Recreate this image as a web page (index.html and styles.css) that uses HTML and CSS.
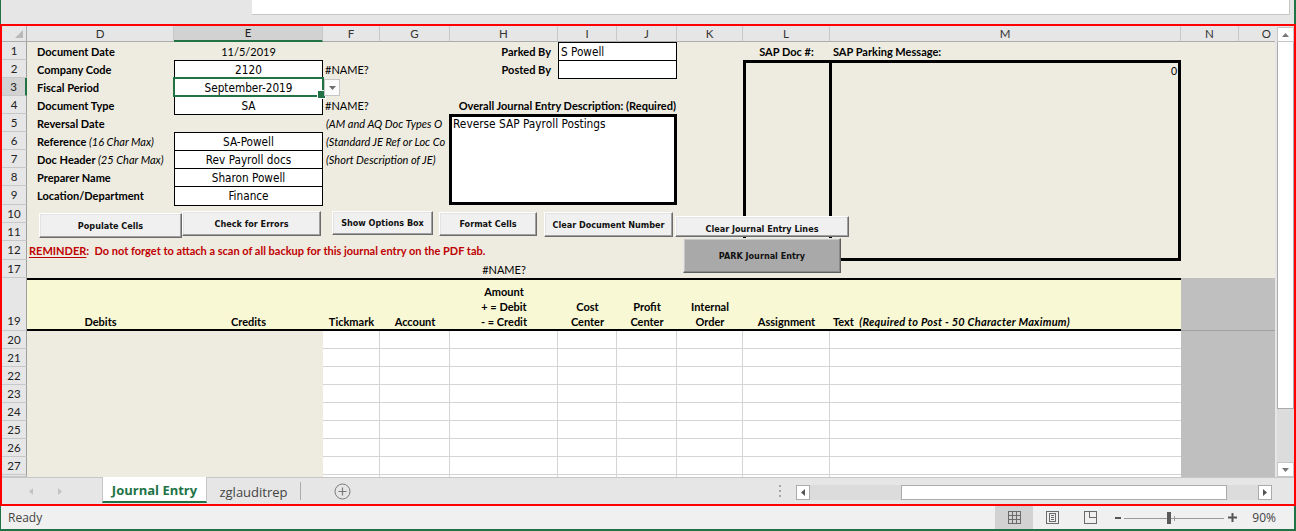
FILE: index.html
```html
<!DOCTYPE html>
<html>
<head>
<meta charset="utf-8">
<title>Journal Entry</title>
<link rel="stylesheet" href="styles.css">
</head>
<body>
<div class="app">
  <div class="topbar"><div class="formula"></div></div>
  <div class="frame">
    <div class="main">
      <div class="sheet">
        <div class="ch corner"><span class="tri"></span></div>
        <div class="ch">D</div>
        <div class="ch sel">E</div>
        <div class="ch">F</div>
        <div class="ch">G</div>
        <div class="ch">H</div>
        <div class="ch">I</div>
        <div class="ch">J</div>
        <div class="ch">K</div>
        <div class="ch">L</div>
        <div class="ch">M</div>
        <div class="ch">N</div>
        <div class="ch last">O</div>

        <div class="rh">1</div>
        <div class="rh">2</div>
        <div class="rh sel">3</div>
        <div class="rh">4</div>
        <div class="rh">5</div>
        <div class="rh">6</div>
        <div class="rh">7</div>
        <div class="rh">8</div>
        <div class="rh">9</div>
        <div class="rh">10</div>
        <div class="rh">11</div>
        <div class="rh">12</div>
        <div class="rh">17</div>
        <div class="rh tall">19</div>
        <div class="rh">20</div>
        <div class="rh">21</div>
        <div class="rh">22</div>
        <div class="rh">23</div>
        <div class="rh">24</div>
        <div class="rh">25</div>
        <div class="rh">26</div>
        <div class="rh">27</div>
        <div class="rh"></div>

        <!-- row 1 -->
        <div class="c lbl y1 xD">Document Date</div>
        <div class="c ctr y1 xE">11/5/2019</div>
        <div class="c lbl rt y1 xH">Parked By</div>
        <div class="box left y1 xIJ">S Powell</div>
        <div class="c lbl ctr y1 xL">SAP Doc #:</div>
        <div class="c lbl y1 xM pad3">SAP Parking Message:</div>

        <!-- row 2 -->
        <div class="c lbl y2 xD">Company Code</div>
        <div class="box y2 xE">2120</div>
        <div class="c err y2 xF">#NAME?</div>
        <div class="c lbl rt y2 xH">Posted By</div>
        <div class="box y2 xIJ"></div>

        <!-- row 3 -->
        <div class="c lbl y3 xD">Fiscal Period</div>
        <div class="box y3 xE">September-2019</div>

        <!-- row 4 -->
        <div class="c lbl y4 xD">Document Type</div>
        <div class="box y4 xE">SA</div>
        <div class="c err y4 xF">#NAME?</div>
        <div class="c lbl rt y4 xHJ">Overall Journal Entry Description: (Required)</div>

        <!-- row 5 -->
        <div class="c lbl y5 xD">Reversal Date</div>
        <div class="c note y5 xF">(AM and AQ Doc Types O</div>

        <!-- row 6 -->
        <div class="c lbl y6 xD"><span>Reference <i>(16 Char Max)</i></span></div>
        <div class="box y6 xE">SA-Powell</div>
        <div class="c note y6 xF">(Standard JE Ref or Loc Co</div>

        <!-- row 7 -->
        <div class="c lbl y7 xD"><span>Doc Header <i>(25 Char Max)</i></span></div>
        <div class="box y7 xE">Rev Payroll docs</div>
        <div class="c note y7 xF">(Short Description of JE)</div>

        <!-- row 8 -->
        <div class="c lbl y8 xD">Preparer Name</div>
        <div class="box y8 xE">Sharon Powell</div>

        <!-- row 9 -->
        <div class="c lbl y9 xD">Location/Department</div>
        <div class="box y9 xE">Finance</div>

        <!-- row 12 -->
        <div class="c reminder"><span><u>REMINDER</u>:&nbsp; Do not forget to attach a scan of all backup for this journal entry on the PDF tab.</span></div>

        <!-- row 17 -->
        <div class="c ctr y17 xH">#NAME?</div>

        <!-- row 19 header -->
        <div class="band"></div>
        <div class="th y19 xD">Debits</div>
        <div class="th y19 xE">Credits</div>
        <div class="th y19 xF">Tickmark</div>
        <div class="th y19 xG">Account</div>
        <div class="th y19 xH">Amount<br>+ = Debit<br>- = Credit</div>
        <div class="th y19 xI">Cost<br>Center</div>
        <div class="th y19 xJ">Profit<br>Center</div>
        <div class="th y19 xK">Internal<br>Order</div>
        <div class="th y19 xL">Assignment</div>
        <div class="th left y19 xM"><span>Text&nbsp; <i>(Required to Post - 50 Character Maximum)</i></span></div>

        <div class="gray ghead"></div>
        <div class="gray gbody"></div>

        <div class="tbody">
          <div></div><div></div><div></div><div></div><div></div><div></div><div></div><div></div>
        </div>

        <!-- shapes on the sheet -->
        <div class="selbox"></div>
        <div class="dd"><svg width="7" height="4" viewBox="0 0 7 4"><path d="M0 0h7L3.5 4z" fill="#6d6d6d"/></svg></div>
        <div class="desc">Reverse SAP Payroll Postings</div>
        <div class="sapbox"><span class="zero">0</span></div>
        <div class="sapdoc"></div>

        <div class="btn b-pop">Populate Cells</div>
        <div class="btn b-chk">Check for Errors</div>
        <div class="btn b-opt">Show Options Box</div>
        <div class="btn b-fmt">Format Cells</div>
        <div class="btn b-cdn">Clear Document Number</div>
        <div class="btn b-cje">Clear Journal Entry Lines</div>
        <div class="btn park">PARK Journal Entry</div>
      </div>
      <div class="vscroll">
        <div class="sbtn"><svg width="7" height="4" viewBox="0 0 7 4"><path d="M0 4h7L3.5 0z" fill="#777"/></svg></div>
        <div class="sthumb"></div>
        <div class="strack"></div>
        <div class="sbtn"><svg width="7" height="4" viewBox="0 0 7 4"><path d="M0 0h7L3.5 4z" fill="#777"/></svg></div>
      </div>
    </div>
    <div class="tabbar">
      <div class="tabnav">
        <svg width="4" height="7" viewBox="0 0 4 7"><path d="M4 0v7L0 3.5z" fill="#c3c3c3"/></svg>
        <svg width="4" height="7" viewBox="0 0 4 7"><path d="M0 0v7l4-3.5z" fill="#c3c3c3"/></svg>
      </div>
      <div class="tab active">Journal Entry</div>
      <div class="tab">zglauditrep</div>
      <div class="tabsep"></div>
      <div class="addtab"><svg width="17" height="17" viewBox="0 0 17 17"><circle cx="8.5" cy="8.5" r="7.5" fill="none" stroke="#7a7a7a"/><path d="M8.5 4.5v8M4.5 8.5h8" stroke="#7a7a7a" stroke-width="1.2"/></svg></div>
      <div class="tabspace"></div>
      <div class="dots"><i></i><i></i><i></i></div>
      <div class="hscroll">
        <div class="hbtn"><svg width="4" height="7" viewBox="0 0 4 7"><path d="M4 0v7L0 3.5z" fill="#555"/></svg></div>
        <div class="htrack"><div class="hthumb"></div></div>
        <div class="hbtn"><svg width="4" height="7" viewBox="0 0 4 7"><path d="M0 0v7l4-3.5z" fill="#555"/></svg></div>
      </div>
    </div>
  </div>
  <div class="status">
    <div class="ready">Ready</div>
    <div class="sright">
      <div class="view on"><svg width="13" height="13" viewBox="0 0 13 13"><rect x=".5" y=".5" width="12" height="12" fill="none" stroke="#6a6a6a"/><path d="M4.5 0v13M8.5 0v13M0 4.5h13M0 8.5h13" stroke="#6a6a6a"/></svg></div>
      <div class="view"><svg width="13" height="13" viewBox="0 0 13 13"><rect x=".5" y=".5" width="12" height="12" fill="none" stroke="#6a6a6a"/><rect x="3.5" y="2.5" width="6" height="8" fill="none" stroke="#6a6a6a"/><path d="M5 4.5h3M5 6.5h3M5 8.5h3" stroke="#6a6a6a"/></svg></div>
      <div class="view"><svg width="13" height="13" viewBox="0 0 13 13"><rect x=".5" y=".5" width="12" height="12" fill="none" stroke="#6a6a6a"/><path d="M5.5 0v7M5.5 6.5h7" stroke="#6a6a6a"/></svg></div>
      <svg class="zminus" width="6" height="2" viewBox="0 0 6 2"><rect width="6" height="2" fill="#555"/></svg>
      <div class="slider"><i class="knob"></i><i class="tick"></i></div>
      <svg class="zplus" width="9" height="9" viewBox="0 0 9 9"><path d="M0 3.5h9v2H0zM3.5 0h2v9h-2z" fill="#555"/></svg>
      <div class="zoomv">90%</div>
    </div>
  </div>
</div>
</body>
</html>
```
FILE: styles.css
```css
* { box-sizing: border-box; margin: 0; padding: 0; }
html, body { width: 1296px; height: 531px; overflow: hidden; }
body { background: #e6e6e6; font-family: "Lato", "Liberation Sans", sans-serif; font-size: 11px; color: #000; }
.app { width: 1296px; height: 531px; display: flex; flex-direction: column; }

/* top formula strip */
.topbar { height: 24px; flex: none; background: #e6e6e6; border-left: 1px solid #217346; border-right: 2px solid #217346; padding-left: 251px; }
.formula { width: 1038px; height: 15px; background: #fff; border-right: 1px solid #c6c6c6; border-bottom: 1px solid #c6c6c6; }

/* red frame */
.frame { height: 482px; flex: none; border: 2px solid #ff0000; display: flex; flex-direction: column; background: #e6e6e6; }
.main { height: 451px; flex: none; display: flex; gap: 2px; }

/* sheet grid */
.sheet {
  position: relative; width: 1273px; height: 451px; flex: none; overflow: hidden;
  display: grid;
  grid-template-columns: 25px 147px 149px 57px 70px 108px 59px 60px 66px 87px 351px 58px 36px;
  grid-template-rows: 16px 18px 18px 18px 18px 18px 18px 18px 18px 19px 18px 18px 19px 18px 53px repeat(8, 18px) 2px;
  background: #eeece1;
}
.ch { grid-row: 1; background: #e6e6e6; border-right: 1px solid #c8c8c8; border-bottom: 1px solid #ababab; font-size: 11.5px; color: #333; display: flex; align-items: center; justify-content: center; line-height: 1; }
.ch.sel { background: #d2d2d2; border-bottom: 2px solid #217346; color: #1d1d1d; }
.ch.last { justify-content: flex-end; padding-right: 4px; border-right: none; }
.ch.corner { position: relative; border-right: 1px solid #ababab; }
.tri { position: absolute; right: 3px; bottom: 3px; width: 0; height: 0; border-left: 8px solid transparent; border-bottom: 8px solid #b9b9b9; }
.rh { grid-column: 1; background: #e6e6e6; border-right: 1px solid #9f9f9f; border-bottom: 1px solid #c8c8c8; font-size: 11.5px; color: #222; display: flex; align-items: center; justify-content: center; line-height: 1; }
.rh.sel { background: #d2d2d2; border-right: 2px solid #217346; }
.rh.tall { align-items: flex-end; padding-bottom: 4px; }

/* placement helpers */
.y1 { grid-row: 2; } .y2 { grid-row: 3; } .y3 { grid-row: 4; } .y4 { grid-row: 5; } .y5 { grid-row: 6; }
.y6 { grid-row: 7; } .y7 { grid-row: 8; } .y8 { grid-row: 9; } .y9 { grid-row: 10; }
.y17 { grid-row: 14; } .y19 { grid-row: 15; }
.xD { grid-column: 2; } .xE { grid-column: 3; } .xF { grid-column: 4; } .xG { grid-column: 5; } .xH { grid-column: 6; }
.xI { grid-column: 7; } .xJ { grid-column: 8; } .xK { grid-column: 9; } .xL { grid-column: 10; } .xM { grid-column: 11; }
.xIJ { grid-column: 7 / 9; } .xHJ { grid-column: 6 / 9; }

.c { display: flex; align-items: center; white-space: nowrap; line-height: 1; }
.lbl { font-weight: bold; padding-left: 10px; }
.lbl i { font-weight: normal; }
.rt { justify-content: flex-end; padding-left: 0; padding-right: 7px; }
.xHJ.rt { padding-right: 1px; }
.ctr { justify-content: center; padding-left: 0; }
.pad3 { padding-left: 3px; }
.err { padding-left: 2px; }
.note { font-style: italic; padding-left: 3px; }

.box { background: #fff; border: 1px solid #000; margin-bottom: -1px; padding-top: 2px; display: flex; align-items: center; justify-content: center; white-space: nowrap;
  font-family: "DejaVu Sans Condensed", "DejaVu Sans", sans-serif; font-stretch: condensed; font-size: 11.7px; line-height: 1; }
.box.left { justify-content: flex-start; padding-left: 2px; }

.reminder { grid-row: 13; grid-column: 2 / 12; padding-left: 2px; color: #c00000; font-weight: bold; }
.reminder u { text-decoration-thickness: 1px; text-underline-offset: 2px; }

/* table header */
.band { grid-row: 15; grid-column: 2 / 12; background: #f8f8d4; border-top: 2px solid #000; border-bottom: 2px solid #000; }
.th { display: flex; flex-direction: column; justify-content: flex-end; align-items: center; text-align: center; font-weight: bold; line-height: 15px; padding-bottom: 2px; white-space: nowrap; }
.th.left { align-items: flex-start; text-align: left; padding-left: 3px; }
.th i { letter-spacing: 0.25px; }
.gray { grid-column: 12 / 14; background: #bfbfbf; }
.ghead { grid-row: 15; border-bottom: 1px solid #a0a0a0; }
.gbody { grid-row: 16 / 25; }
.tbody { grid-row: 16 / 25; grid-column: 4 / 12; display: grid;
  grid-template-columns: 57px 70px 108px 59px 60px 66px 87px 351px;
  background: repeating-linear-gradient(to bottom, #fff 0 17px, #d4d4d4 17px 18px); }
.tbody > div { border-right: 1px solid #d4d4d4; }
.tbody > div:last-child { border-right: none; }

/* shapes */
.selbox { grid-row: 4; grid-column: 3; margin: -1px; border: 2px solid #217346; position: relative; }
.selbox::after { content: ""; position: absolute; right: -4px; bottom: -4px; width: 7px; height: 7px; background: #217346; border: 1px solid #fff; }
.dd { grid-row: 4; grid-column: 4; justify-self: start; align-self: start; width: 16px; height: 17px; margin: 1px 0 0 1px; background: #fbfbfb; border: 1px solid #c6c6c6; display: flex; align-items: center; justify-content: center; position: relative; }
.desc { grid-row: 6 / 11; grid-column: 6 / 9; background: #fff; border: 3px solid #000; margin-left: -1px; padding: 1px 0 0 1px;
  font-family: "DejaVu Sans Condensed", "DejaVu Sans", sans-serif; font-stretch: condensed; font-size: 11.8px; line-height: 13px; white-space: nowrap; position: relative; }
.sapbox { grid-row: 3 / 14; grid-column: 10 / 12; border: 3px solid #000; margin-bottom: -1px; display: flex; justify-content: flex-end; align-items: flex-start; }
.zero { font-size: 10.5px; line-height: 12px; padding: 2px 1px 0 0; }
.sapdoc { grid-row: 3 / 14; grid-column: 10; border-right: 3px solid #000; margin-right: -2px; }

/* form buttons */
.btn { position: absolute; background: #f0f0f0; border: 1px solid; border-color: #fff #6b6b6b #6b6b6b #fff; box-shadow: inset -1px -1px 0 #a0a0a0, inset 1px 1px 0 #e3e3e3;
  display: flex; align-items: center; justify-content: center; overflow: hidden; white-space: nowrap;
  font-family: "DejaVu Sans Condensed", "DejaVu Sans", sans-serif; font-stretch: condensed; font-size: 9px; font-weight: bold; color: #111; }
.b-pop { left: 37px; top: 187px; width: 143px; height: 25px; }
.b-chk { left: 180px; top: 185px; width: 139px; height: 25px; }
.b-opt { left: 330px; top: 185px; width: 101px; height: 24px; }
.b-fmt { left: 437px; top: 186px; width: 98px; height: 24px; }
.b-cdn { left: 542px; top: 186px; width: 129px; height: 25px; }
.b-cje { left: 673px; top: 190px; width: 174px; height: 21px; align-items: flex-end; padding-bottom: 1px; line-height: 11px; }
.park { left: 681px; top: 212px; width: 158px; height: 35px; background: #a9a9a9; border-color: #e6e6e6 #5e5e5e #5e5e5e #e6e6e6; box-shadow: inset -1px -1px 0 #8a8a8a, inset 1px 1px 0 #c8c8c8; }

/* vertical scrollbar */
.vscroll { width: 17px; flex: none; display: flex; flex-direction: column; padding-top: 1px; background: #e6e6e6; }
.sbtn { height: 15px; flex: none; background: #fff; border: 1px solid #c6c6c6; display: flex; align-items: center; justify-content: center; }
.sthumb { height: 367px; flex: none; background: #fff; border: 1px solid #ababab; border-top: none; }
.strack { flex: 1; background: #dcdcdc; }

/* sheet tabs */
.tabbar { height: 27px; flex: none; display: flex; border-top: 1px solid #c6c6c6; background: #e6e6e6; font-family: "Open Sans", "Noto Sans", sans-serif; font-size: 13px; color: #444; }
.tabnav { width: 100px; flex: none; display: flex; align-items: center; gap: 25px; padding-left: 27px; padding-top: 1px; }
.tab { flex: none; display: flex; align-items: center; justify-content: center; height: 25px; padding-top: 2px; }
.tab.active { width: 105px; background: #fff; border-left: 1px solid #c6c6c6; border-right: 1px solid #c6c6c6; border-bottom: 2px solid #217346; color: #217346; font-weight: bold; margin-top: -1px; height: 26px; }
.tab:not(.active) { width: 93px; }
.tabsep { width: 1px; flex: none; background: #ababab; margin: 4px 0 4px; }
.addtab { width: 82px; flex: none; display: flex; align-items: center; justify-content: center; padding-top: 1px; }
.tabspace { flex: 1; }
.dots { width: 3px; flex: none; display: flex; flex-direction: column; justify-content: center; gap: 3px; margin-right: 14px; }
.dots i { display: block; width: 2px; height: 2px; background: #a6a6a6; }
.hscroll { width: 476px; height: 15px; flex: none; margin-top: 7px; margin-right: 22px; display: flex; }
.hbtn { width: 14px; flex: none; background: #fff; border: 1px solid #ababab; display: flex; align-items: center; justify-content: center; }
.htrack { flex: 1; background: #dcdcdc; padding-left: 91px; }
.hthumb { width: 326px; height: 15px; background: #fff; border: 1px solid #ababab; }

/* status bar */
.status { height: 25px; flex: none; background: #f0f0f0; border-left: 1px solid #217346; border-right: 2px solid #217346; border-bottom: 2px solid #217346;
  display: flex; justify-content: space-between; font-family: "Open Sans", "Noto Sans", sans-serif; font-size: 12px; color: #444; }
.ready { padding-left: 7px; display: flex; align-items: center; }
.sright { display: flex; align-items: center; margin-right: 18px; }
.view { width: 38px; height: 23px; display: flex; align-items: center; justify-content: center; }
.view.on { background: #d2d2d2; }
.zminus { margin-left: 6px; }
.slider { position: relative; width: 100px; height: 12px; margin-left: 3px; background: linear-gradient(#9a9a9a, #9a9a9a) 0 6px / 100% 1px no-repeat; }
.knob { position: absolute; left: 43px; top: 0; width: 4px; height: 12px; background: #5a5a5a; }
.tick { position: absolute; left: 50px; top: 4px; width: 1px; height: 5px; background: #9a9a9a; }
.zplus { margin-left: 4px; }
.zoomv { margin-left: 15px; font-size: 12px; }
```
